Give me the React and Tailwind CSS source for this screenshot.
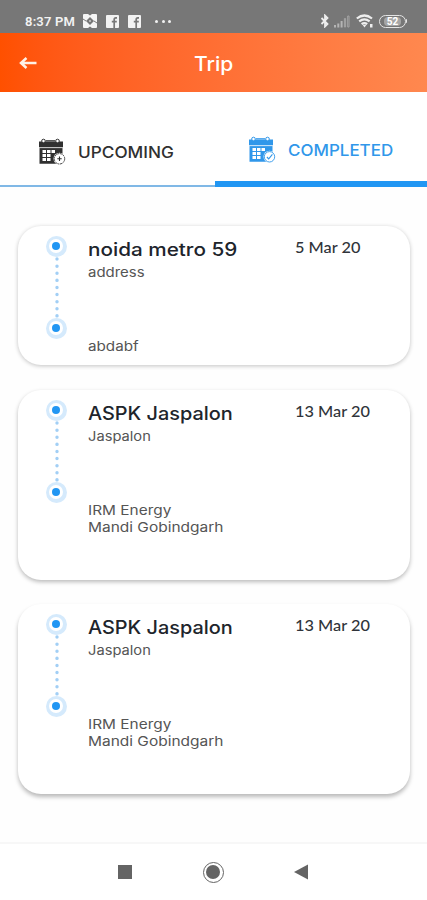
import React, { useState } from 'react';

const trips = [
  {
    id: 1,
    from: { text: 'noida metro 59', scale: 'scale-x-[1.15]' },
    fromAddress: { text: 'address', scale: 'scale-x-[1.15]' },
    to: [{ text: 'abdabf', scale: 'scale-x-[1.17]' }],
    date: '5 Mar 20',
    card: 'h-[139px] mb-[25px] shadow-[0_1px_4px_rgba(0,0,0,0.24)]',
  },
  {
    id: 2,
    from: { text: 'ASPK Jaspalon', scale: 'scale-x-[1.105]' },
    fromAddress: { text: 'Jaspalon', scale: 'scale-x-[1.13]' },
    to: [
      { text: 'IRM Energy', scale: 'scale-x-[1.185]' },
      { text: 'Mandi Gobindgarh', scale: 'scale-x-[1.19]' },
    ],
    date: '13 Mar 20',
    card: 'h-[190px] mb-6 shadow-[0_2px_4px_rgba(0,0,0,0.27)]',
  },
  {
    id: 3,
    from: { text: 'ASPK Jaspalon', scale: 'scale-x-[1.105]' },
    fromAddress: { text: 'Jaspalon', scale: 'scale-x-[1.13]' },
    to: [
      { text: 'IRM Energy', scale: 'scale-x-[1.185]' },
      { text: 'Mandi Gobindgarh', scale: 'scale-x-[1.19]' },
    ],
    date: '13 Mar 20',
    card: 'h-[190px] shadow-[0_3px_4px_rgba(0,0,0,0.27)]',
  },
];

const FacebookIcon = ({ className }) => (
  <svg className={className} width="13" height="13" viewBox="0 0 13 13">
    <path fill="#f2f2f2" d="M1 0h11a1 1 0 0 1 1 1v11a1 1 0 0 1-1 1H1a1 1 0 0 1-1-1V1a1 1 0 0 1 1-1z" />
    <path fill="none" stroke="#777" strokeWidth="1.7" d="M11 2.9H9.8Q8.2 2.9 8.2 4.6V13M5.8 6.7h5" />
  </svg>
);

const StatusBar = () => (
  <div className="flex h-[33px] items-center bg-[#777777] pt-[9px] pr-[20px] pl-[25px] text-[#f2f2f2]">
    <span className="w-[58px] font-['Roboto'] text-[13px] leading-none font-semibold tracking-[0.2px] whitespace-nowrap">8:37 PM</span>
    <svg width="14" height="14" viewBox="0 0 14 14">
      <rect width="14" height="14" rx="1" fill="#f5f5f5" />
      <path fill="#777" d="M7 3L11 7 7 11 3 7zM5 0h4L7 1.600zM5 14h4L7 12.400z" />
      <path fill="#f5f5f5" d="M7 6l1 1-1 1-1-1z" />
      <path stroke="#777" strokeWidth="1" d="M0 5l3 2M14 9l-3-2" />
    </svg>
    <FacebookIcon className="ml-[9px]" />
    <FacebookIcon className="ml-[9px]" />
    <div className="ml-[14px] flex gap-[3.5px]">
      <span className="h-[3px] w-[3px] rounded-full bg-[#f2f2f2]" />
      <span className="h-[3px] w-[3px] rounded-full bg-[#f2f2f2]" />
      <span className="h-[3px] w-[3px] rounded-full bg-[#f2f2f2]" />
    </div>
    <div className="ml-auto flex items-center">
      <svg width="10" height="14" viewBox="0 0 10 14" fill="none" stroke="#eee" strokeWidth="1.800">
        <path d="M1.500 4l6 6L5 12.500v-11L7.500 4l-6 6" />
      </svg>
      <svg className="ml-[3px]" width="17" height="13" viewBox="0 0 17 13">
        <path fill="#b5b5b5" d="M1 10h2v2.500H1zM4.300 8.500h2v4h-2zM7.600 6h2v6.500h-2z" />
        <path fill="none" stroke="#a5a5a5" d="M11.400 3.500h1.200v8.500h-1.200zM14.700 1h1.300v11h-1.300z" />
      </svg>
      <svg className="ml-[6px]" width="17" height="14" viewBox="0 0 17 14" fill="none" stroke="#eee" strokeWidth="2.200">
        <path d="M.8 4.500q7.600-6 15.200 0M3.200 7.400q5.200-4.200 10.400 0M5.600 10.200q2.800-2.200 5.600 0" />
        <path fill="#eee" stroke="none" d="M6.500 10.800h4l-2 2.600zM14 10h2.500v3.500H14z" />
      </svg>
      <div className="ml-[6px] flex h-[13px] w-[27px] items-center justify-center rounded-full border-[1.5px] border-[#e5e5e5]">
        <span className="rounded-sm bg-[#a5a5a5] px-[3px] font-['Roboto'] text-[10px] leading-[9px] font-bold text-white">52</span>
      </div>
      <span className="h-[4px] w-[1px] rounded-r bg-[#e5e5e5]" />
    </div>
  </div>
);

const Header = () => (
  <div className="grid h-[59px] grid-cols-[1fr_auto_1fr] items-center bg-gradient-to-r from-[#ff5000] to-[#ff884f] text-white">
    <button type="button" className="ml-[19px] w-[18px]">
      <svg width="18" height="12" viewBox="0 0 18 12" fill="none" stroke="#fff0e5" strokeWidth="2.500">
        <path d="M17.500 6H2M7.500 1L2 6l5.500 5" />
      </svg>
    </button>
    <h1 className="scale-x-[1.05] pt-[2px] font-['Inter'] text-[20px] leading-none font-medium">Trip</h1>
  </div>
);

const CalendarIcon = ({ color, done }) => (
  <svg width="28" height="28" viewBox="0 0 28 28">
    <path fill={color} d="M1 3.500h24v6H1zM1.500 10h23v15.800h-23z" />
    <g fill="#fff">
      <path d="M4.500 12h3.500v3H4.500zM9 12h3.500v3H9zM13.500 12h3.500v3h-3.500zM4.500 16h3.500v3H4.500zM9 16h3.500v3H9zM4.500 20h3.500v3H4.500zM9 20h3.500v3H9z" />
      <circle cx="21.500" cy="20.800" r="6" />
    </g>
    <path stroke="#fff" strokeWidth=".5" d="M1 9.700h24" />
    <circle cx="5.500" cy="3" r="1.800" fill="#fff" stroke={color} />
    <circle cx="19.500" cy="3" r="1.800" fill="#fff" stroke={color} />
    <path stroke={color} strokeWidth="1.200" d="M8 2.800h9" />
    <circle cx="21.500" cy="20.800" r="5.200" fill="none" stroke={color} strokeWidth=".9" strokeDasharray={done ? undefined : '2 .7'} />
    <path fill="none" stroke={color} strokeWidth="1.100" d={done ? 'M18.900 21l1.800 1.900 3.700-4.600' : 'M19.300 20.800h4.400M21.500 18.600v4.400'} />
  </svg>
);

const Tabs = ({ setActive }) => (
  <div className="flex h-[95px] font-['Inter'] font-medium">
    <button
      type="button"
      onClick={() => setActive('upcoming')}
      className="flex w-[215px] items-start border-b-2 border-[#80b8e6] pt-[46px] pl-[38px] text-[#303030]"
    >
      <CalendarIcon color="#303030" />
      <span className="ml-[12px] origin-left scale-x-[1.075] text-[16px] leading-[28px]">UPCOMING</span>
    </button>
    <button
      type="button"
      onClick={() => setActive('completed')}
      className="flex flex-1 items-start border-b-[6px] border-[#2196f3] pt-[44px] pl-[33px] text-[#3097ea]"
    >
      <CalendarIcon color="#3097ea" done />
      <span className="ml-[12px] origin-left scale-x-[1.06] text-[16px] leading-[28px]">COMPLETED</span>
    </button>
  </div>
);

const Stop = () => (
  <div className="flex h-[21px] w-[21px] items-center justify-center rounded-full bg-[#d5eafc]">
    <div className="flex h-[14px] w-[14px] items-center justify-center rounded-full bg-white">
      <div className="h-[7.5px] w-[7.5px] rounded-full bg-[#2196f3]" />
    </div>
  </div>
);

const TripCard = ({ trip }) => (
  <div className={`flex rounded-[23px] bg-white ${trip.card}`}>
    <div className="flex w-[70px] flex-col items-center pt-[9.5px] pl-[6px]">
      <Stop />
      <svg className="ml-[1px]" width="4" height="61" viewBox="0 0 4 61">
        <path d="M2 2v58" stroke="#a2cff5" strokeWidth="3.400" strokeLinecap="round" strokeDasharray="0.1 7" />
      </svg>
      <Stop />
    </div>
    <div className="w-[207px] pt-[12px] font-['Inter'] whitespace-nowrap">
      <h2 className={`origin-left text-[18px] leading-[24px] font-medium text-[#20242b] ${trip.from.scale}`}>{trip.from.text}</h2>
      <p className={`origin-left pt-[1px] text-[13px] leading-[18px] text-[#555555] ${trip.fromAddress.scale}`}>{trip.fromAddress.text}</p>
      <div className="mt-[56.5px] text-[13px] leading-[17px] text-[#555555]">
        {trip.to.map((line) => (
          <p key={line.text} className={`origin-left ${line.scale}`}>{line.text}</p>
        ))}
      </div>
    </div>
    <span className="origin-left scale-x-[1.02] self-start pt-[11px] font-['Lato'] text-[16px] leading-[20px] font-medium text-[#30343a]">{trip.date}</span>
  </div>
);

const NavigationBar = () => (
  <div className="flex h-[58px] items-center justify-between border-t-2 border-[#f7f7f7] pr-[119px] pl-[118px]">
    <div className="h-[14px] w-[14px] bg-[#646464]" />
    <div className="flex h-[21px] w-[21px] items-center justify-center rounded-full border-[1.5px] border-[#646464]">
      <div className="h-[14px] w-[14px] rounded-full bg-[#646464]" />
    </div>
    <svg width="14" height="16" viewBox="0 0 14 16">
      <path fill="#646464" d="M0 8L14 .5v15z" />
    </svg>
  </div>
);

const App = () => {
  const [active, setActive] = useState('completed');

  return (
    <div className="flex h-[900px] w-[427px] flex-col overflow-hidden bg-white">
      <StatusBar />
      <Header />
      <Tabs active={active} setActive={setActive} />
      <div className="flex-1 bg-[#fefefe] pt-[39px] pr-[17px] pl-[18px]">
        {trips.map((trip) => (
          <TripCard key={trip.id} trip={trip} />
        ))}
      </div>
      <NavigationBar />
    </div>
  );
};

export default App;
